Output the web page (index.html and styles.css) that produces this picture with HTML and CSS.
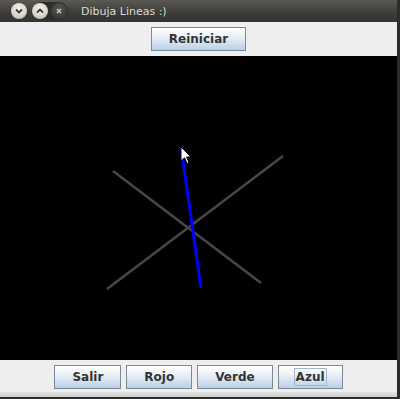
FILE: index.html
```html
<!DOCTYPE html>
<html lang="es">
<head>
  <meta charset="UTF-8">
  <title>Dibuja Lineas :)</title>
  <link rel="stylesheet" href="styles.css">
</head>
<body>
  <div class="window">
    <div class="titlebar">
      <div class="controls">
        <span class="ctl light">
          <svg width="16" height="16" viewBox="0 0 16 16"><path d="M5 6.5 L8 9.5 L11 6.5" fill="none" stroke="#3a3935" stroke-width="1.8"/></svg>
        </span>
        <div class="ctl-group">
          <span class="ctl light">
            <svg width="16" height="16" viewBox="0 0 16 16"><path d="M5 9.5 L8 6.5 L11 9.5" fill="none" stroke="#3a3935" stroke-width="1.8"/></svg>
          </span>
          <span class="ctl dark">
            <svg width="16" height="16" viewBox="0 0 16 16"><path d="M6 6 L10 10 M10 6 L6 10" fill="none" stroke="#c9c6bf" stroke-width="1.5"/></svg>
          </span>
        </div>
      </div>
      <span class="title">Dibuja Lineas :)</span>
    </div>

    <div class="panel top">
      <button class="btn">Reiniciar</button>
    </div>

    <div class="canvas">
      <svg class="drawing" width="397" height="304" viewBox="0 0 397 304">
        <line x1="113" y1="115" x2="261" y2="227" stroke="#474747" stroke-width="2.6"/>
        <line x1="283" y1="100" x2="107" y2="233" stroke="#474747" stroke-width="2.6"/>
        <line x1="181" y1="91" x2="201" y2="232" stroke="#0000ff" stroke-width="3"/>
      </svg>
      <svg class="cursor" width="14" height="20" viewBox="0 0 14 20">
        <path d="M1 1 L1 15 L4.5 11.8 L7 17.5 L9 16.6 L6.6 11 L11 11 Z" fill="#fff" stroke="#000" stroke-width="1"/>
      </svg>
    </div>

    <div class="panel bottom">
      <button class="btn">Salir</button>
      <button class="btn">Rojo</button>
      <button class="btn">Verde</button>
      <button class="btn"><span class="focus">Azul</span></button>
    </div>
    <div class="frame-bottom"></div>
  </div>
</body>
</html>
```

FILE: styles.css
```css
body {
  margin: 0;
  background-color: #2e2c29;
  width: 400px;
  height: 399px;
  overflow: hidden;
}
.window {
  width: 397px;
  height: 397px;
  background-color: #eeeeee;
  display: flex;
  flex-direction: column;
}
.titlebar {
  height: 22px;
  background: linear-gradient(#5b5953, #3c3b37 60%, #353431);
  display: flex;
  align-items: center;
  font-family: "DejaVu Sans", sans-serif;
  font-size: 11px;
  color: #dfdbd2;
}
.controls {
  display: flex;
  align-items: center;
  margin-left: 11px;
  gap: 5px;
}
.ctl-group {
  display: flex;
  gap: 3px;
  background-color: #2f2e2b;
  border-radius: 9px;
  padding: 1px 1px 1px 0;
}
.ctl {
  width: 16px;
  height: 16px;
  border-radius: 50%;
  display: flex;
}
.ctl.light {
  background: radial-gradient(circle at 50% 35%, #f4f2ec, #d6d3cc 60%, #aaa79f);
}
.ctl.dark {
  background: radial-gradient(circle at 50% 35%, #55534e, #3d3c38 70%, #2a2926);
}
.title {
  margin-left: 13px;
}
.panel {
  display: flex;
  justify-content: center;
  gap: 5px;
}
.panel.top {
  height: 34px;
  padding-top: 5px;
  box-sizing: border-box;
}
.panel.bottom {
  height: 32px;
  padding-top: 5px;
  box-sizing: border-box;
}
.btn {
  height: 24px;
  padding: 0 17px;
  border: 1px solid #7a8a99;
  border-radius: 0;
  background: linear-gradient(#ffffff, #eef3f9 35%, #c6d8ea 85%, #b8cfe5);
  font-family: "DejaVu Sans", sans-serif;
  font-weight: bold;
  font-size: 12px;
  color: #333333;
  cursor: pointer;
}
.focus {
  outline: 1px solid #a3b8cc;
  outline-offset: 1px;
}
.canvas {
  height: 304px;
  background-color: #000;
  position: relative;
}
.drawing {
  display: block;
}
.cursor {
  position: absolute;
  left: 180px;
  top: 90px;
}
.frame-bottom {
  height: 5px;
  background: linear-gradient(#e2e2e2, #cfcfcf);
}
```
